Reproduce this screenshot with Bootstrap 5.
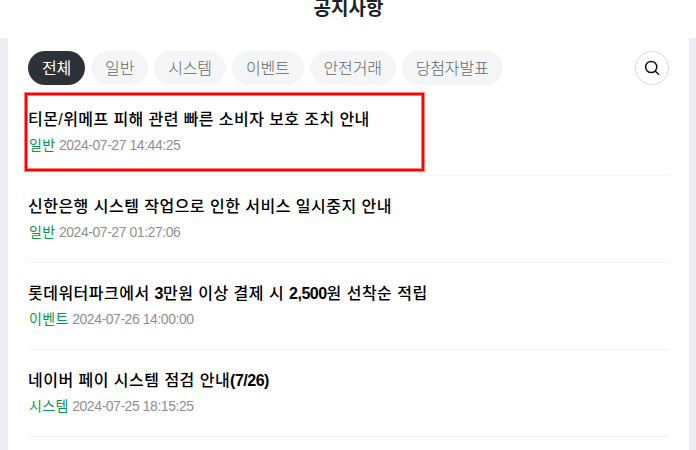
<!DOCTYPE html>
<html lang="ko">
<head>
<meta charset="utf-8">
<meta name="viewport" content="width=device-width, initial-scale=1">
<title>공지사항</title>
<link href="https://cdn.jsdelivr.net/npm/bootstrap@5.3.0/dist/css/bootstrap.min.css" rel="stylesheet">
<style>
body { font-family: "Liberation Sans", "Noto Sans CJK KR", sans-serif; height: 450px; overflow: hidden; }
.page-title { height: 38px; font-size: 19px; line-height: 18px; color: #1e2023; padding-left: 1px; }
.page-main { height: 412px; background: #ecedf2; padding: 0 7px 0 8px; }
.panel { padding: 13px 20px 0; }
.filters { gap: 6px; }
.filter { height: 34px; padding: 0 14px; line-height: 35px; font-size: 16px; letter-spacing: -.17px; background: #f3f5f7; color: #666; border: 0; font-weight: 300; }
.filter.active { background: #2d3239; color: #fff; font-weight: 400; }
.search-btn { width: 34px; height: 34px; border: 1px solid #d9d9d9; }
.notice { height: 87px; padding: 19px 0 0; border-bottom: 1px solid #f3f4f5; }
.notice:first-child { height: 91px; padding-top: 23px; }
.notice-title { font-size: 16px; line-height: 24px; font-weight: 500; color: #000; letter-spacing: .48px; }
.notice:first-child .notice-title { letter-spacing: .42px; }
.notice-title b { letter-spacing: -.5px; }
.notice-meta { font-size: 14px; line-height: 20px; margin-top: 3px; padding-left: 1px; color: #909090; letter-spacing: -.45px; }
.notice-type { color: #0a9650; letter-spacing: .35px; }
.highlight { left: 24px; top: 92px; width: 401px; height: 80px; border: 1px solid #ff8080; box-shadow: inset 0 0 0 2px #f00, inset 0 0 0 3px #ff8080; }
</style>
</head>
<body class="bg-white position-relative">
<header class="page-title text-center fw-bold"><span>공지사항</span></header>
<main class="page-main">
  <section class="panel bg-white h-100">
    <div class="d-flex justify-content-between">
      <nav class="filters d-flex">
        <button class="filter active rounded-pill">전체</button>
        <button class="filter rounded-pill">일반</button>
        <button class="filter rounded-pill">시스템</button>
        <button class="filter rounded-pill">이벤트</button>
        <button class="filter rounded-pill">안전거래</button>
        <button class="filter rounded-pill">당첨자발표</button>
      </nav>
      <button class="search-btn rounded-circle bg-white p-0 d-flex align-items-center justify-content-center" aria-label="검색">
        <svg width="16" height="16" viewBox="0 0 16 16" fill="none" stroke="#111" stroke-width="1.5"><circle cx="7.2" cy="7" r="5.6"/><path d="M11.2 11 15 14.7"/></svg>
      </button>
    </div>
    <div>
      <article class="notice">
        <div class="notice-title">티몬/위메프 피해 관련 빠른 소비자 보호 조치 안내</div>
        <div class="notice-meta"><span class="notice-type">일반</span> <span>2024-07-27 14:44:25</span></div>
      </article>
      <article class="notice">
        <div class="notice-title">신한은행 시스템 작업으로 인한 서비스 일시중지 안내</div>
        <div class="notice-meta"><span class="notice-type">일반</span> <span>2024-07-27 01:27:06</span></div>
      </article>
      <article class="notice">
        <div class="notice-title">롯데워터파크에서 <b>3</b>만원 이상 결제 시 <b>2,500</b>원 선착순 적립</div>
        <div class="notice-meta"><span class="notice-type">이벤트</span> <span>2024-07-26 14:00:00</span></div>
      </article>
      <article class="notice">
        <div class="notice-title">네이버 페이 시스템 점검 안내<b>(7/26)</b></div>
        <div class="notice-meta"><span class="notice-type">시스템</span> <span>2024-07-25 18:15:25</span></div>
      </article>
    </div>
  </section>
</main>
<div class="highlight position-absolute"></div>
<script src="https://cdn.jsdelivr.net/npm/bootstrap@5.3.0/dist/js/bootstrap.bundle.min.js"></script>
</body>
</html>
